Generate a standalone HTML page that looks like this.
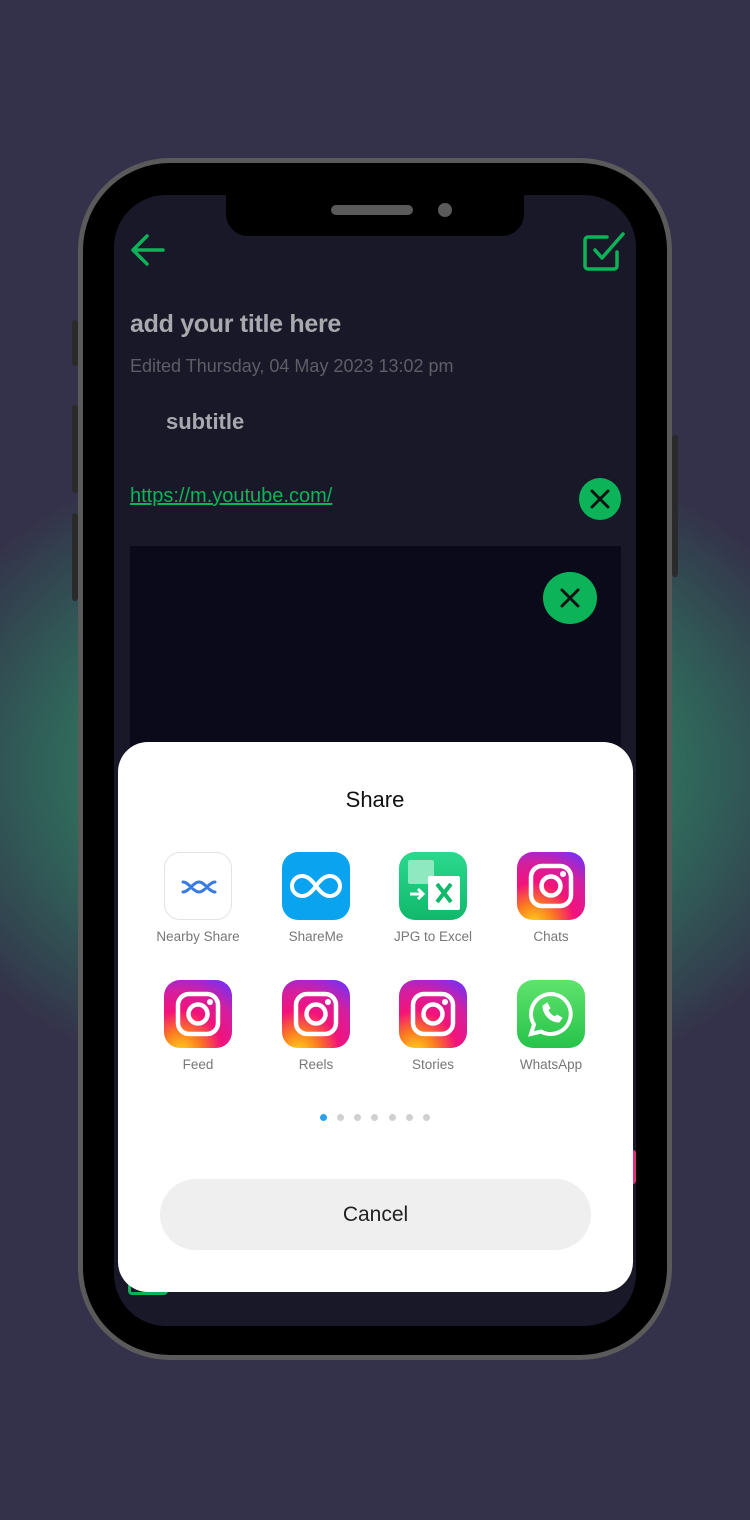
<!DOCTYPE html>
<html><head><meta charset="utf-8"><style>
*{margin:0;padding:0;box-sizing:border-box}
body{width:750px;height:1520px;overflow:hidden;background:#34314a;position:relative;font-family:"Liberation Sans",sans-serif}
.glow{position:absolute;left:-125px;top:420px;width:1000px;height:700px;border-radius:50%;background:radial-gradient(ellipse at center,#2f8a66 0%,#2e7a60 35%,rgba(52,49,74,0) 70%)}
.btn{position:absolute;background:#2a2a2a;border-radius:3px}
.phone{position:absolute;left:78px;top:158px;width:594px;height:1202px;border-radius:92px;background:#000;border:5px solid #5a5a5a}
.screen{position:absolute;left:114px;top:195px;width:522px;height:1131px;border-radius:52px;background:#181828;overflow:hidden}
.notch{position:absolute;left:226px;top:195px;width:298px;height:41px;background:#000;border-radius:0 0 22px 22px}
.t{position:absolute;white-space:nowrap}
.x{position:absolute;border-radius:50%;background:#0db358}
.sheet{position:absolute;left:118px;top:742px;width:515px;height:550px;background:#fff;border-radius:30px}
.ic{position:absolute;width:68px;height:68px;border-radius:16px;overflow:hidden}
.lb{position:absolute;width:120px;text-align:center;font-size:13.5px;color:#777}
.dot{position:absolute;top:1114px;width:7px;height:7px;border-radius:50%;background:#d0d0d0}
</style></head><body>
<div class="glow"></div>
<div class="btn" style="left:72px;top:320px;width:6px;height:46px"></div>
<div class="btn" style="left:72px;top:405px;width:6px;height:88px"></div>
<div class="btn" style="left:72px;top:513px;width:6px;height:88px"></div>
<div class="btn" style="left:672px;top:435px;width:6px;height:142px"></div>
<div class="phone"></div>
<div class="screen">
 <div style="position:absolute;left:16px;top:351px;width:491px;height:250px;background:#0b0a1a"></div>
</div>
<div class="notch"></div>
<div style="position:absolute;left:331px;top:205px;width:82px;height:10px;border-radius:5px;background:#5a5a5a"></div>
<div style="position:absolute;left:438px;top:203px;width:14px;height:14px;border-radius:50%;background:#5a5a5a"></div>
<svg style="position:absolute;left:128px;top:230px" width="40" height="40" viewBox="0 0 40 40" fill="none" stroke="#0db358" stroke-width="3.5" stroke-linecap="round" stroke-linejoin="round"><path d="M35 20H5M19 6L5 20l14 14"/></svg>
<svg style="position:absolute;left:581px;top:228px" width="46" height="46" viewBox="0 0 46 46" fill="none" stroke="#0db358" stroke-width="3.5" stroke-linecap="round" stroke-linejoin="round"><path d="M36 24v14a3 3 0 0 1-3 3H7a3 3 0 0 1-3-3V12a3 3 0 0 1 3-3h19"/><path d="M14 22l7 8L42 6"/></svg>
<div class="t" style="left:130px;top:310px;font-size:25px;color:#a8a8ae;font-weight:bold;letter-spacing:-0.3px">add your title here</div>
<div class="t" style="left:130px;top:356px;font-size:18px;color:#5e5e68">Edited Thursday, 04 May 2023 13:02 pm</div>
<div class="t" style="left:166px;top:409px;font-size:22px;color:#a8a8ae;font-weight:bold">subtitle</div>
<div class="t" style="left:130px;top:485px;font-size:20px;color:#0db358;text-decoration:underline">https://m.youtube.com/</div>
<div class="x" style="left:579px;top:478px;width:42px;height:42px"><svg width="42" height="42" viewBox="0 0 42 42" stroke="#111" stroke-width="3" stroke-linecap="round"><path d="M13 13l16 16M29 13L13 29"/></svg></div>
<div class="x" style="left:543px;top:572px;width:54px;height:52px"><svg width="54" height="52" viewBox="0 0 54 52" stroke="#111" stroke-width="3" stroke-linecap="round"><path d="M19 18l16 16M35 18L19 34"/></svg></div>
<div style="position:absolute;left:128px;top:1270px;width:40px;height:25px;border:3px solid #0db358;border-radius:4px"></div>
<div style="position:absolute;left:630px;top:1150px;width:6px;height:34px;background:#e0307a;border-radius:3px"></div>
<div class="sheet"></div>
<div class="t" style="left:0;width:750px;text-align:center;top:787px;font-size:22px;color:#111">Share</div>

<div class="ic" style="left:164px;top:852px;background:#fff;border:1px solid #e3e3e3"><svg width="68" height="68" viewBox="0 0 68 68" fill="none" stroke="#3a7be0" stroke-width="3" stroke-linecap="round"><path d="M18 29c6 0 10 10 16 10s10-10 16-10M18 39c6 0 10-10 16-10s10 10 16 10"/></svg></div>
<div class="lb" style="left:138px;top:929px">Nearby Share</div>

<div class="ic" style="left:282px;top:852px;background:#0aa3ef"><svg width="68" height="68" viewBox="0 0 68 68" fill="none" stroke="#fff" stroke-width="4"><path d="M34 34c-5-7-9-10-14-10a10 10 0 0 0 0 20c5 0 9-3 14-10s9-10 14-10a10 10 0 0 1 0 20c-5 0-9-3-14-10z"/></svg></div>
<div class="lb" style="left:256px;top:929px">ShareMe</div>

<div class="ic" style="left:399px;top:852px;background:linear-gradient(#2bd98e,#10b86b)"><svg width="68" height="68" viewBox="0 0 68 68"><rect x="9" y="8" width="26" height="24" rx="2" fill="#8ee8c0"/><rect x="29" y="24" width="32" height="34" rx="2" fill="#fff"/><path d="M38 32l14 18M52 32L38 50" stroke="#10b86b" stroke-width="4"/><path d="M11 42h12M19 37l5 5-5 5" stroke="#fff" stroke-width="3" fill="none"/></svg></div>
<div class="lb" style="left:373px;top:929px">JPG to Excel</div>

<svg width="0" height="0" style="position:absolute"><defs><radialGradient id="ig" cx="0.25" cy="1.05" r="1.2"><stop offset="0" stop-color="#fdd21b"/><stop offset="0.25" stop-color="#fb7a21"/><stop offset="0.5" stop-color="#f3127a"/><stop offset="0.75" stop-color="#d31fa0"/><stop offset="1" stop-color="#7c2ff0"/></radialGradient></defs></svg>

<div class="ic" style="left:517px;top:852px"><svg width="68" height="68" viewBox="0 0 68 68"><rect width="68" height="68" fill="url(#ig)"/><rect x="14" y="14" width="40" height="40" rx="11" fill="none" stroke="#fff" stroke-width="4.5"/><circle cx="34" cy="34" r="9.5" fill="none" stroke="#fff" stroke-width="4.5"/><circle cx="46" cy="22" r="3" fill="#fff"/></svg></div>
<div class="lb" style="left:491px;top:929px">Chats</div>

<div class="ic" style="left:164px;top:980px"><svg width="68" height="68" viewBox="0 0 68 68"><rect width="68" height="68" fill="url(#ig)"/><rect x="14" y="14" width="40" height="40" rx="11" fill="none" stroke="#fff" stroke-width="4.5"/><circle cx="34" cy="34" r="9.5" fill="none" stroke="#fff" stroke-width="4.5"/><circle cx="46" cy="22" r="3" fill="#fff"/></svg></div>
<div class="lb" style="left:138px;top:1057px">Feed</div>
<div class="ic" style="left:282px;top:980px"><svg width="68" height="68" viewBox="0 0 68 68"><rect width="68" height="68" fill="url(#ig)"/><rect x="14" y="14" width="40" height="40" rx="11" fill="none" stroke="#fff" stroke-width="4.5"/><circle cx="34" cy="34" r="9.5" fill="none" stroke="#fff" stroke-width="4.5"/><circle cx="46" cy="22" r="3" fill="#fff"/></svg></div>
<div class="lb" style="left:256px;top:1057px">Reels</div>
<div class="ic" style="left:399px;top:980px"><svg width="68" height="68" viewBox="0 0 68 68"><rect width="68" height="68" fill="url(#ig)"/><rect x="14" y="14" width="40" height="40" rx="11" fill="none" stroke="#fff" stroke-width="4.5"/><circle cx="34" cy="34" r="9.5" fill="none" stroke="#fff" stroke-width="4.5"/><circle cx="46" cy="22" r="3" fill="#fff"/></svg></div>
<div class="lb" style="left:373px;top:1057px">Stories</div>
<div class="ic" style="left:517px;top:980px;background:linear-gradient(#5fe36d,#27c34a)"><svg width="68" height="68" viewBox="0 0 68 68" fill="none" stroke="#fff" stroke-width="4"><path d="M34 14a20 20 0 1 1-10 37.5L14 54l3-9.5A20 20 0 0 1 34 14z"/><path d="M26 26c0 8 7 16 16 16l3-4-5-3-2 2c-3-1-6-4-7-7l2-2-3-5z" fill="#fff" stroke-width="1"/></svg></div>
<div class="lb" style="left:491px;top:1057px">WhatsApp</div>

<div class="dot" style="left:320px;background:#2aa0f0"></div>
<div class="dot" style="left:337px"></div>
<div class="dot" style="left:354px"></div>
<div class="dot" style="left:371px"></div>
<div class="dot" style="left:389px"></div>
<div class="dot" style="left:406px"></div>
<div class="dot" style="left:423px"></div>

<div style="position:absolute;left:160px;top:1179px;width:431px;height:71px;border-radius:36px;background:#efefef;text-align:center;line-height:71px;font-size:21px;color:#222">Cancel</div>
</body></html>
